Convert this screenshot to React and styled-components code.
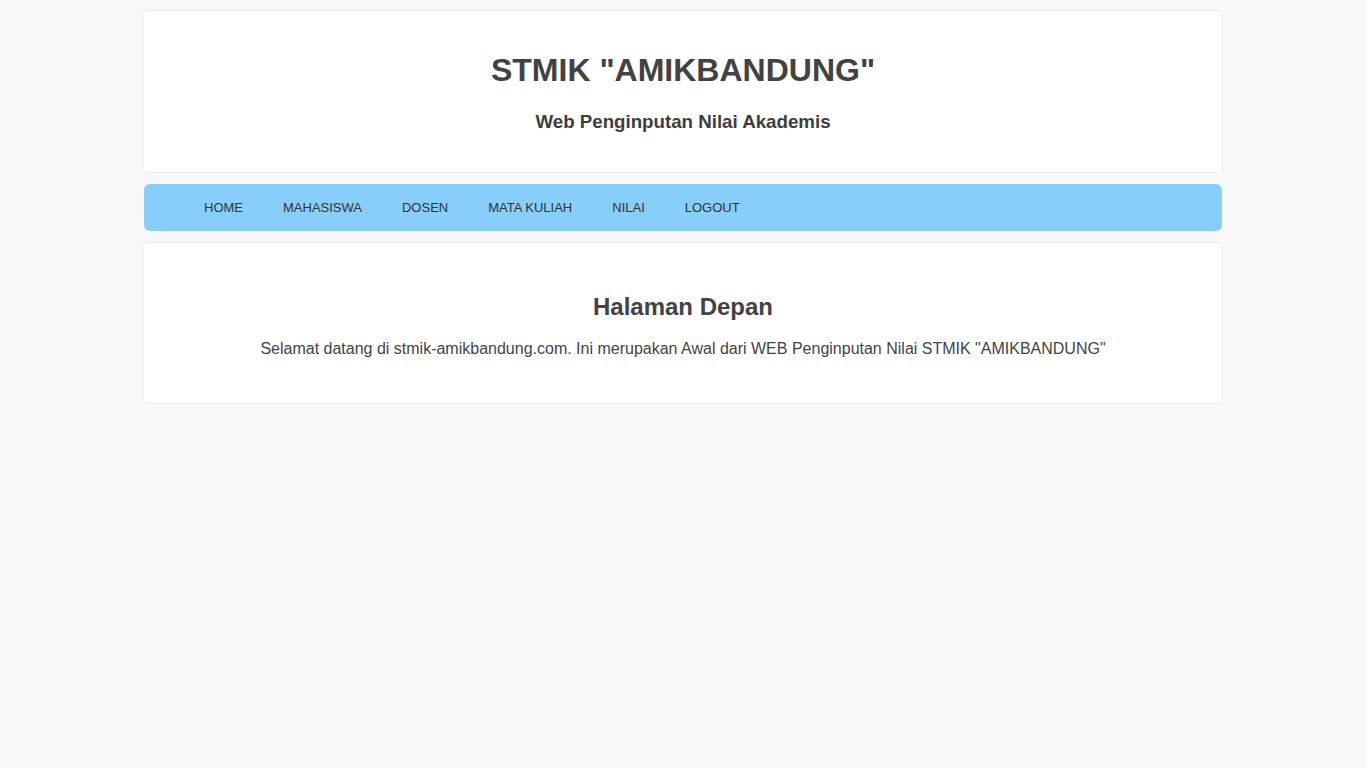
import React from "react";
import styled, { createGlobalStyle } from "styled-components";

const Global = createGlobalStyle`
  html, body { margin: 0; padding: 0; background: #f8f8f8; }
  body { font-family: "Liberation Sans", Arial, sans-serif; color: #444; }
`;

const Container = styled.div`
  width: 1080px;
  margin: 10px auto 0;
  display: flex;
  flex-direction: column;
  gap: 11px;
`;

const Card = styled.div`
  background: #fff;
  border: 1px solid #ececec;
  border-radius: 5px;
  padding: ${(p) => p.$pad || "20px"};
  text-align: center;
`;

const Title = styled.h1`
  font-size: 32px;
  font-weight: bold;
  margin: 21px 0 22px;
  color: #424242;
`;

const Subtitle = styled.h3`
  font-size: 18.72px;
  font-weight: bold;
  margin: 18.72px 0 19px;
  color: #3d3d3d;
`;

const Nav = styled.nav`
  background: #87cefa;
  border-radius: 6px;
  height: 47px;
  margin: 0 1px;
  display: flex;
  align-items: center;
  padding-left: 40px;
`;

const NavItem = styled.a`
  font-size: 13px;
  color: #333;
  padding: 0 20px;
  text-decoration: none;
  line-height: 47px;
`;

const PageTitle = styled.h2`
  font-size: 24px;
  font-weight: bold;
  margin: 20px 0 19px;
  color: #424242;
`;

const Para = styled.p`
  font-size: 16px;
  margin: 16px 0 15px;
  color: #444;
`;

export default function App() {
  const items = ["HOME", "MAHASISWA", "DOSEN", "MATA KULIAH", "NILAI", "LOGOUT"];
  return (
    <>
      <Global />
      <Container>
        <Card>
          <Title>STMIK "AMIKBANDUNG"</Title>
          <Subtitle>Web Penginputan Nilai Akademis</Subtitle>
        </Card>
        <Nav>
          {items.map((t) => (
            <NavItem key={t} href="#">{t}</NavItem>
          ))}
        </Nav>
        <Card $pad="30px">
          <PageTitle>Halaman Depan</PageTitle>
          <Para>
            Selamat datang di stmik-amikbandung.com. Ini merupakan Awal dari WEB Penginputan Nilai STMIK "AMIKBANDUNG"
          </Para>
        </Card>
      </Container>
    </>
  );
}
